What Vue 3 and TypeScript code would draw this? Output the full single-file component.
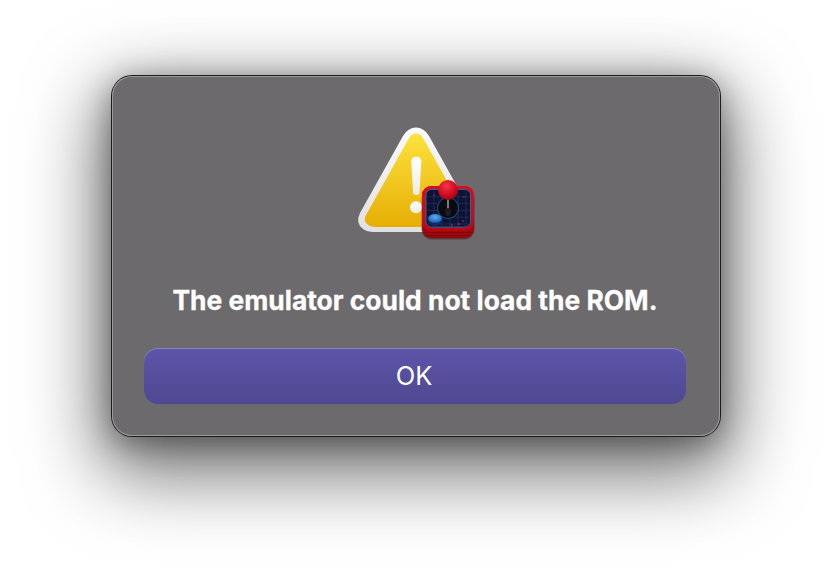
<script setup lang="ts">
const message: string = 'The emulator could not load the ROM.'
const gridLines: number[] = [8, 16, 24, 32, 40]
const sparks: [number, number, string][] = [
  [37, 38, '#9a2a68'],
  [41, 35, '#7a2a78'],
  [30, 39, '#8a2a60'],
  [12, 9, '#6a2a78'],
  [42, 11, '#6a2a78'],
]
</script>

<template>
  <div class="page">
    <div class="dialog">
      <svg class="icon" width="150" height="130" viewBox="0 0 150 130">
        <defs>
          <linearGradient id="rim" x1="0" y1="0" x2="0" y2="1">
            <stop offset="0" stop-color="#fbfbfb" />
            <stop offset="1" stop-color="#e0e0e0" />
          </linearGradient>
          <linearGradient id="amber" x1="0" y1="0" x2="0" y2="1">
            <stop offset="0" stop-color="#fde23c" />
            <stop offset="1" stop-color="#e6ae05" />
          </linearGradient>
          <linearGradient id="bang" x1="0" y1="0" x2="0" y2="1">
            <stop offset="0" stop-color="#ffffff" />
            <stop offset="1" stop-color="#ececec" />
          </linearGradient>
          <linearGradient id="red" x1="0" y1="0" x2="0" y2="1">
            <stop offset="0" stop-color="#dc0c20" />
            <stop offset="1" stop-color="#b80a16" />
          </linearGradient>
          <linearGradient id="base" x1="0" y1="0" x2="0" y2="1">
            <stop offset="0" stop-color="#d80e1c" />
            <stop offset="1" stop-color="#96070c" />
          </linearGradient>
          <radialGradient id="ball" cx="0.42" cy="0.3" r="0.75">
            <stop offset="0" stop-color="#f2374a" />
            <stop offset="0.6" stop-color="#d40a1e" />
            <stop offset="1" stop-color="#8d0410" />
          </radialGradient>
          <radialGradient id="puck" cx="0.5" cy="0.35" r="0.7">
            <stop offset="0" stop-color="#5aaef0" />
            <stop offset="1" stop-color="#1657b0" />
          </radialGradient>
        </defs>

        <path d="M63 21 Q68 12.5 76 12.5 Q84 12.5 89 21 L132 98 Q137 108 129 114 Q125 117 120 117 L32 117 Q27 117 23 114 Q15 108 20 98 Z" fill="url(#rim)" />
        <path d="M69 23 Q72 18.5 76 18.5 Q80 18.5 83 23 L126 100 Q129 105 125 109 Q122 112 118 112 L34 112 Q30 112 27 109 Q23 105 26 100 Z" fill="url(#amber)" />
        <path d="M71.3 46.5 Q71.3 41.7 76.3 41.7 Q81.3 41.7 81.3 46.5 L79.6 77 Q79.4 80 76.3 80 Q73.2 80 73 77 Z" fill="url(#bang)" />
        <circle cx="76" cy="92.3" r="6" fill="url(#bang)" />

        <g transform="translate(82 71)">
          <rect x="-0.5" y="2" width="53" height="51.5" rx="10" fill="#3a0a0a" opacity="0.45" />
          <rect x="0" y="0" width="52" height="52" rx="9" fill="url(#base)" />
          <path d="M1.5 46.5 H50.5 M3 49.5 H49" stroke="#7a0508" stroke-width="1" opacity="0.7" />
          <rect x="0" y="0" width="52" height="44.5" rx="9" fill="url(#red)" />
          <rect x="4" y="3.5" width="44.5" height="37.5" rx="5.5" fill="#0c1433" stroke="#1f6a9c" stroke-width="1" />
          <g stroke="#34346e" stroke-width="0.7" opacity="0.85">
            <line v-for="g in gridLines" :key="'v' + g" :x1="4 + g" y1="4.5" :x2="4 + g" y2="40.5" />
            <line v-for="g in gridLines" :key="'h' + g" x1="5" :y1="4 + g * 0.85" x2="48" :y2="4 + g * 0.85" />
          </g>
          <circle v-for="(s, i) in sparks" :key="i" :cx="s[0]" :cy="s[1]" r="0.9" :fill="s[2]" />
          <circle cx="26" cy="22" r="10.5" fill="#0b0b0f" stroke="#1c4f84" stroke-width="1" />
          <rect x="25.2" y="10" width="1.6" height="15" fill="#8f93a6" />
          <ellipse cx="26" cy="26" rx="3" ry="4" fill="#1c1c22" />
          <circle cx="26" cy="4" r="10" fill="url(#ball)" />
          <ellipse cx="13" cy="34" rx="7.2" ry="5.8" fill="#0f2f6a" />
          <ellipse cx="13" cy="32.4" rx="6.8" ry="4.4" fill="url(#puck)" />
        </g>
      </svg>

      <p class="message">{{ message }}</p>
      <button class="ok" type="button">OK</button>
    </div>
  </div>
</template>

<style scoped>
.page {
  width: 832px;
  height: 584px;
  padding-top: 76px;
  box-sizing: border-box;
  background: #ffffff;
  overflow: hidden;
}
.dialog {
  width: 608px;
  height: 360px;
  margin: 0 auto;
  box-sizing: border-box;
  padding: 39px 34px 0 32px;
  display: flex;
  flex-direction: column;
  align-items: center;
  background: #6c6a6c;
  border-radius: 20px;
  box-shadow:
    0 0 0 1px #1c1c1c,
    inset 0 0 0 1px #9a9a9a,
    0 26px 76px 12px rgba(0, 0, 0, 0.56),
    0 6px 30px 2px rgba(0, 0, 0, 0.34);
}
.icon {
  display: block;
  flex: none;
}
.message {
  margin: 40px 0 0;
  font-family: Inter, "Liberation Sans", sans-serif;
  font-size: 26.4px;
  line-height: 30px;
  font-weight: 700;
  color: #ffffff;
  white-space: nowrap;
  -webkit-text-stroke: 0.3px #ffffff;
}
.ok {
  display: block;
  width: 542px;
  height: 56px;
  margin-top: 33px;
  padding: 0 2px 2px 0;
  border: 0;
  border-radius: 14px;
  background: linear-gradient(#5d55a9, #4f4891);
  box-shadow: inset 0 1px 0 #8a82c0;
  font-family: Inter, "Liberation Sans", sans-serif;
  font-size: 25.5px;
  font-weight: 400;
  color: #ffffff;
}
</style>
